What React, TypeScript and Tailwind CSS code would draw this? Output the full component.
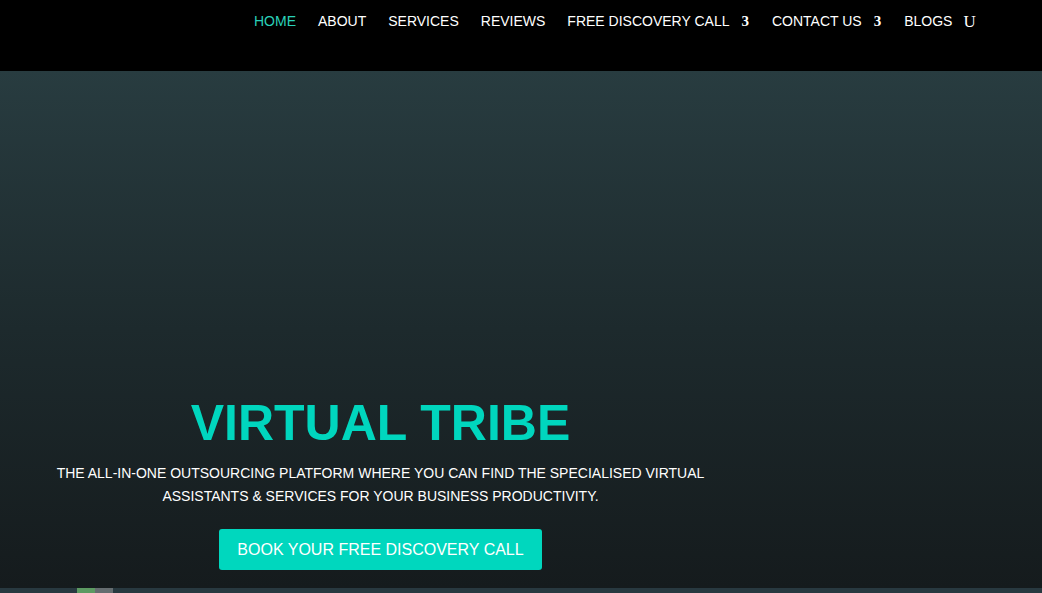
import React from "react";

const navItems: { label: string; active?: boolean; icon?: string }[] = [
  { label: "HOME", active: true },
  { label: "ABOUT" },
  { label: "SERVICES" },
  { label: "REVIEWS" },
  { label: "FREE DISCOVERY CALL", icon: "3" },
  { label: "CONTACT US", icon: "3" },
  { label: "BLOGS", icon: "U" },
];

export default function App() {
  return (
    <div className="w-[1042px] h-[593px] overflow-hidden bg-black font-['Liberation_Sans',Arial,sans-serif]">
      <header className="h-[71px] bg-black flex items-start pl-[254px] pt-[13px]">
        <nav className="flex items-center gap-[22px] text-[14px] leading-[17px]">
          {navItems.map((it) => (
            <div key={it.label} className="flex items-center">
              <span className={it.active ? "text-[#2ad1b9]" : "text-white"}>{it.label}</span>
              {it.icon === "3" && (
                <span className="ml-[12px] pr-[1px] text-white font-['Liberation_Serif',serif] text-[15px] font-bold">
                  3
                </span>
              )}
              {it.icon === "U" && (
                <span className="ml-[11px] text-white font-['Liberation_Serif',serif] text-[17px] leading-[17px]">
                  U
                </span>
              )}
            </div>
          ))}
        </nav>
      </header>
      <section className="h-[517px] bg-gradient-to-b from-[#283c40] via-[#1d2a2d] to-[#151b1d] flex flex-col justify-end pb-[18px]">
        <div className="w-[761px] flex flex-col items-center text-center">
          <h1 className="text-[50px] leading-[58px] font-bold text-[#00d6be]">VIRTUAL TRIBE</h1>
          <p className="mt-[10px] text-[14px] leading-[23px] text-white w-[700px]">
            THE ALL-IN-ONE OUTSOURCING PLATFORM WHERE YOU CAN FIND THE SPECIALISED VIRTUAL ASSISTANTS &amp; SERVICES FOR YOUR BUSINESS PRODUCTIVITY.
          </p>
          <button className="mt-[21px] h-[41px] w-[323px] rounded-[3px] bg-[#00d7be] text-white text-[16px]">
            BOOK YOUR FREE DISCOVERY CALL
          </button>
        </div>
      </section>
      <div className="h-[5px] bg-[#283940] flex">
        <div className="w-[77px]" />
        <div className="w-[18px] bg-[#5c9a62]" />
        <div className="w-[18px] bg-[#656d70]" />
      </div>
    </div>
  );
}
